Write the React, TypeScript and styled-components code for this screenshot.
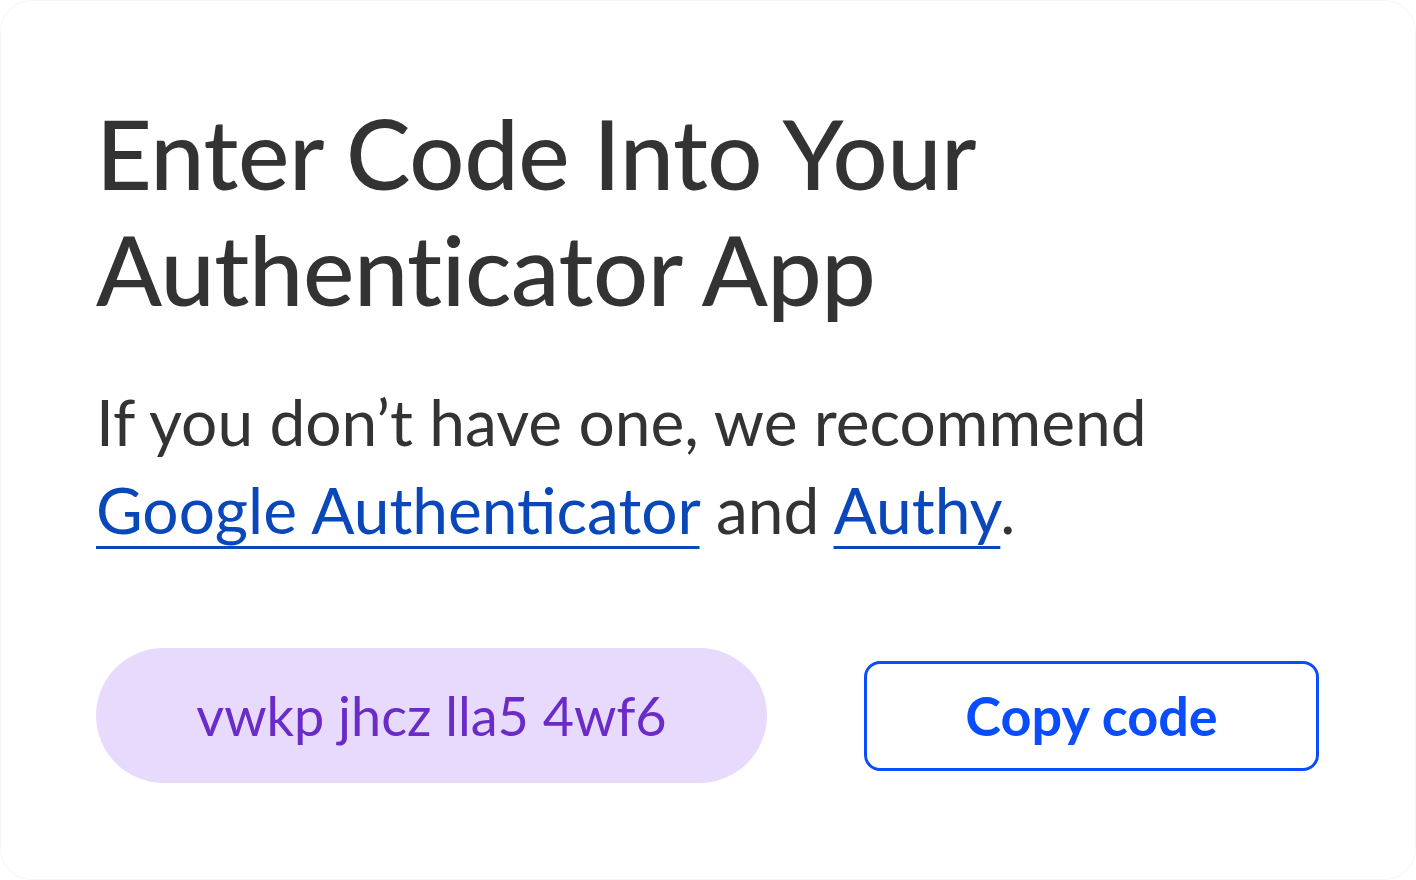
import React from "react";
import styled, { createGlobalStyle } from "styled-components";

const Global = createGlobalStyle`
  html, body { margin: 0; padding: 0; background: #ffffff; }
  body { font-family: "Lato", "Noto Sans", sans-serif; }
`;

const Card = styled.div`
  box-sizing: border-box;
  width: 1416px;
  height: 880px;
  border: 1px solid #f6f6f6;
  border-radius: 32px;
  background: #ffffff;
  padding: 94px 96px 0 95px;
  display: flex;
  flex-direction: column;
`;

const Title = styled.h1`
  margin: 0;
  font-size: 97px;
  line-height: 116px;
  font-weight: 500;
  color: #333333;
  letter-spacing: -0.4px;
`;

const Lead = styled.p`
  margin: 51px 0 0;
  font-size: 64px;
  line-height: 88px;
  font-weight: 400;
  color: #333333;
`;

const Link = styled.a`
  color: #0a47b8;
  text-decoration: underline;
  text-decoration-thickness: 3px;
  text-underline-offset: 12px;
`;

const Actions = styled.div`
  margin-top: 94px;
  display: flex;
  align-items: center;
  gap: 97px;
`;

const CodePill = styled.div`
  width: 671px;
  height: 135px;
  border-radius: 68px;
  background: #e8dafd;
  color: #6a2bc8;
  font-size: 54px;
  display: flex;
  align-items: center;
  justify-content: center;
`;

const CopyButton = styled.button`
  box-sizing: border-box;
  width: 455px;
  height: 110px;
  border: 3px solid #0a4dff;
  border-radius: 16px;
  background: #ffffff;
  color: #0a4dff;
  font-family: inherit;
  font-size: 54px;
  font-weight: 700;
  display: flex;
  align-items: center;
  justify-content: center;
  cursor: pointer;
`;

export default function App() {
  return (
    <>
      <Global />
      <Card>
        <Title>
          Enter Code Into Your
          <br />
          Authenticator App
        </Title>
        <Lead>
          If you don’t have one, we recommend
          <br />
          <Link href="#">Google Authenticator</Link> and <Link href="#">Authy</Link>.
        </Lead>
        <Actions>
          <CodePill>vwkp jhcz lla5 4wf6</CodePill>
          <CopyButton>Copy code</CopyButton>
        </Actions>
      </Card>
    </>
  );
}
